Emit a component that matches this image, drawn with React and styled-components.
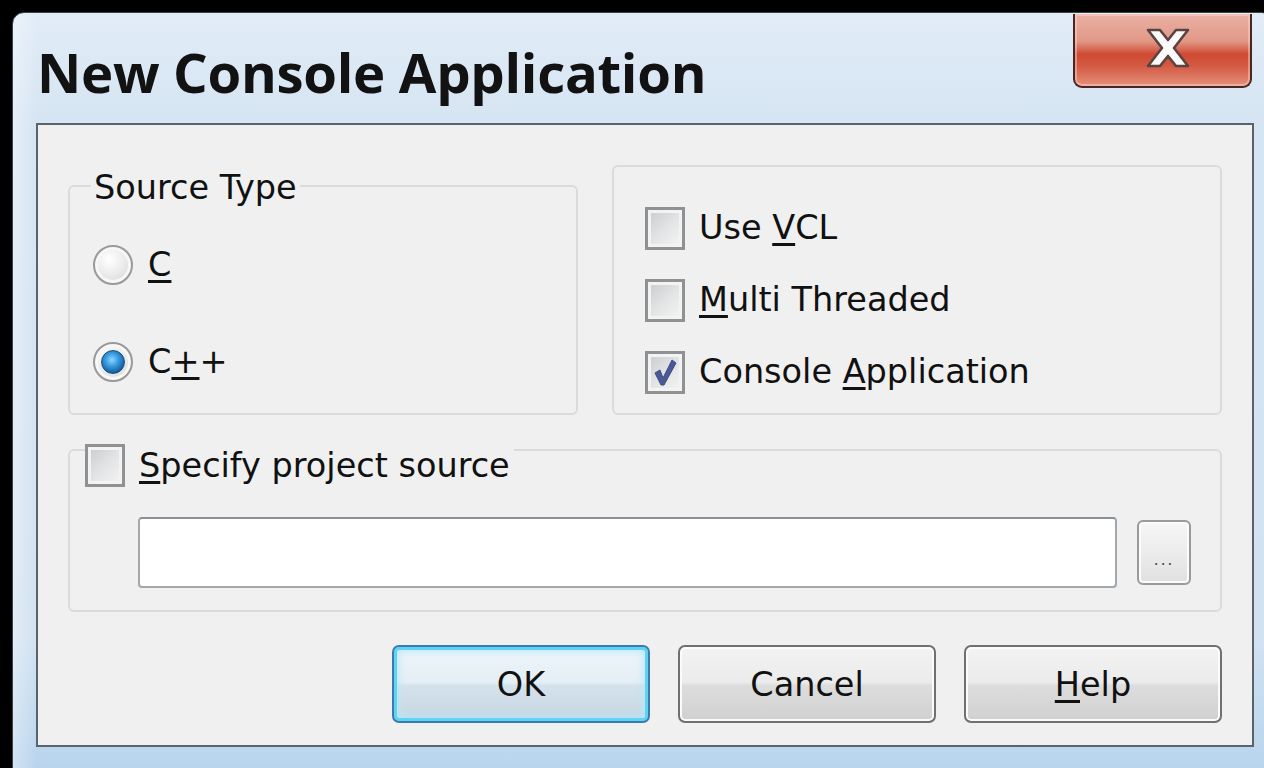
import React from 'react'
import styled, { createGlobalStyle } from 'styled-components'

const GlobalStyle = createGlobalStyle`
  html, body {
    margin: 0;
    padding: 0;
    background: #000;
  }
  body {
    font-family: "DejaVu Sans", Verdana, sans-serif;
  }
`

const Screen = styled.div`
  width: 1264px;
  height: 768px;
  box-sizing: border-box;
  padding: 12px 0 0 12px;
  overflow: hidden;
  background: #000;
`

const Window = styled.div`
  width: 1262px;
  height: 780px;
  box-sizing: border-box;
  border: 1px solid #3c434b;
  border-radius: 12px 12px 0 0;
  padding-left: 23px;
  background:
    linear-gradient(90deg, rgba(255,255,255,0.35) 0px, rgba(255,255,255,0) 24px),
    linear-gradient(180deg, #e1ecf7 0%, #d6e5f3 14%, #d2e2f1 80%, #b4d2ec 100%);
  display: flex;
  flex-direction: column;
`

const TitleBar = styled.div`
  width: 1218px;
  height: 110px;
  display: flex;
  justify-content: space-between;
  align-items: flex-start;
`

const Title = styled.h1`
  margin: 32px 0 0 1px;
  font-family: "Open Sans", "DejaVu Sans", sans-serif;
  font-weight: 700;
  font-size: 54.5px;
  line-height: 54px;
  letter-spacing: -0.3px;
  color: #121212;
`

const CloseButton = styled.button`
  width: 179px;
  height: 74px;
  margin: 1px 2px 0 0;
  padding: 0 0 4px 10px;
  border: 2px solid #4a2620;
  border-top: none;
  border-radius: 0 0 9px 9px;
  background: linear-gradient(180deg, #eab1a5 0%, #e19886 38%, #cf4a33 56%, #d35a42 72%, #e4907b 100%);
  box-shadow: inset 0 0 0 2px rgba(255, 220, 210, 0.45);
  display: flex;
  align-items: center;
  justify-content: center;
  cursor: pointer;
`

const Client = styled.div`
  width: 1218px;
  height: 624px;
  box-sizing: border-box;
  border: 2px solid #5a636c;
  background: #f0f0f0;
  padding: 40px 30px 0 30px;
  display: flex;
  flex-direction: column;
  color: #111;
  font-size: 33.5px;
`

const TopRow = styled.div`
  display: flex;
  gap: 34px;
  height: 250px;
`

const Group = styled.fieldset`
  margin: 0;
  min-width: 0;
  box-sizing: border-box;
  border: 2px solid #d9dcdf;
  border-radius: 6px;
  width: ${p => p.$width}px;
  padding: ${p => p.$pad};
  display: flex;
  flex-direction: column;
  gap: ${p => p.$gap}px;
`

const PlainGroup = styled.div`
  box-sizing: border-box;
  border: 2px solid #d9dcdf;
  border-radius: 6px;
  width: ${p => p.$width}px;
  padding: ${p => p.$pad};
  display: flex;
  flex-direction: column;
  gap: ${p => p.$gap}px;
`

const Legend = styled.legend`
  margin-left: -2px;
  padding: 4px 3px 0 3px;
  line-height: 38px;
`

const CheckLegend = styled.legend`
  margin-left: -53px;
  padding: 0 4px 0 0;
  height: 12px;
  display: flex;
  align-items: flex-start;
  gap: 14px;
  line-height: 44px;
`

const OptionRow = styled.label`
  display: flex;
  align-items: center;
  gap: ${p => p.$gap || 14}px;
  height: 44px;
  line-height: 38px;
`

const Mn = styled.span`
  text-decoration: underline;
  text-decoration-thickness: 3px;
  text-underline-offset: 4px;
`

const RadioCircle = styled.span`
  width: 40px;
  height: 40px;
  box-sizing: border-box;
  border-radius: 50%;
  border: 2px solid #9a9a9a;
  background: radial-gradient(circle at 40% 35%, #ffffff 0%, #ececec 45%, #cfcfcf 100%);
  box-shadow: inset 0 0 0 3px #f7f7f7;
  display: flex;
  align-items: center;
  justify-content: center;
  flex: none;

  &::after {
    content: '';
    display: ${p => (p.$on ? 'block' : 'none')};
    width: 22px;
    height: 22px;
    border-radius: 50%;
    border: 1px solid #1c4f7a;
    background: radial-gradient(circle at 45% 40%, #8fd4ff 0%, #3a9ee0 35%, #0d5a9c 75%, #083e6e 100%);
  }
`

const CheckBox = styled.span`
  width: 40px;
  height: 43px;
  box-sizing: border-box;
  border: 3px solid #8f9193;
  background: linear-gradient(135deg, #c9cacb 0%, #e2e3e4 50%, #f5f5f5 100%);
  box-shadow: inset 0 0 0 3px #f3f3f3;
  display: flex;
  align-items: center;
  justify-content: center;
  flex: none;
`

const BottomGroup = styled(Group)`
  margin-top: 29px;
  height: 168px;
  flex-direction: row;
  align-items: stretch;
  gap: 20px;
`

const PathInput = styled.input`
  width: 980px;
  height: 71px;
  box-sizing: border-box;
  border: 2px solid #a3a8ad;
  border-top-color: #8b9096;
  border-radius: 4px;
  background: #fff;
  font: inherit;
  outline: none;
`

const EllipsisButton = styled.button`
  width: 54px;
  height: 65px;
  margin-top: 3px;
  box-sizing: border-box;
  border: 2px solid #9a9a9a;
  border-radius: 6px;
  background: linear-gradient(180deg, #f6f6f6 0%, #ececec 50%, #e0e0e0 100%);
  box-shadow: inset 0 0 0 2px #fbfbfb;
  font-family: "DejaVu Sans", sans-serif;
  font-size: 15px;
  color: #444;
  display: flex;
  align-items: flex-end;
  justify-content: center;
  padding: 0 0 14px 0;
  letter-spacing: 2px;
`

const ButtonRow = styled.div`
  margin-top: 33px;
  display: flex;
  justify-content: flex-end;
  gap: 28px;
`

const DialogButton = styled.button`
  width: 258px;
  height: 78px;
  box-sizing: border-box;
  border-radius: 7px;
  border: 2px solid ${p => (p.$primary ? '#3a7cae' : '#707070')};
  background: ${p =>
    p.$primary
      ? 'linear-gradient(180deg, #eef5fa 0%, #e4eef5 48%, #d4e2ec 52%, #c6d6e2 100%)'
      : 'linear-gradient(180deg, #f3f3f3 0%, #ebebeb 48%, #dddddd 52%, #d0d0d0 100%)'};
  box-shadow: ${p =>
    p.$primary
      ? 'inset 0 0 0 3px #5fd3f6, inset 0 0 8px 4px #b5e9f8'
      : 'inset 0 0 0 2px #fbfbfb'};
  font-family: "DejaVu Sans", Verdana, sans-serif;
  font-size: 33.5px;
  color: #111;
  cursor: pointer;
`

const CloseGlyph = () => (
  <svg width="46" height="40" viewBox="-3 -2 46 40">
    <polygon
      points="0,0 12,0 20,10 28,0 40,0 26,18 40,36 28,36 20,26 12,36 0,36 14,18"
      fill="#fafafa"
      stroke="#5b4340"
      strokeWidth="2.6"
      strokeLinejoin="round"
    />
  </svg>
)

const Tick = () => (
  <svg width="26" height="30" viewBox="0 0 26 30">
    <path
      d="M3 16 L8 13 L11 21 L20 3 L24 6 L12 28 L9 28 Z"
      fill="#4c5896"
      stroke="#3e4a86"
      strokeWidth="1"
      strokeLinejoin="round"
    />
  </svg>
)

export default function App() {
  return (
    <Screen>
      <GlobalStyle />
      <Window>
        <TitleBar>
          <Title>New Console Application</Title>
          <CloseButton aria-label="Close">
            <CloseGlyph />
          </CloseButton>
        </TitleBar>

        <Client>
          <TopRow>
            <Group $width={510} $pad="36px 0 0 23px" $gap={53}>
              <Legend>Source Type</Legend>
              <OptionRow $gap={15}>
                <RadioCircle />
                <Mn>C</Mn>
              </OptionRow>
              <OptionRow $gap={15}>
                <RadioCircle $on />
                <span>C<Mn>+</Mn>+</span>
              </OptionRow>
            </Group>

            <PlainGroup $width={610} $pad="39px 0 0 31px" $gap={28}>
              <OptionRow>
                <CheckBox />
                <span>Use <Mn>V</Mn>CL</span>
              </OptionRow>
              <OptionRow>
                <CheckBox />
                <span><Mn>M</Mn>ulti Threaded</span>
              </OptionRow>
              <OptionRow>
                <CheckBox>
                  <Tick />
                </CheckBox>
                <span>Console <Mn>A</Mn>pplication</span>
              </OptionRow>
            </PlainGroup>
          </TopRow>

          <BottomGroup $pad="61px 29px 21px 68px">
            <CheckLegend>
              <CheckBox />
              <span><Mn>S</Mn>pecify project source</span>
            </CheckLegend>
            <PathInput />
            <EllipsisButton>...</EllipsisButton>
          </BottomGroup>

          <ButtonRow>
            <DialogButton $primary>OK</DialogButton>
            <DialogButton>Cancel</DialogButton>
            <DialogButton><Mn>H</Mn>elp</DialogButton>
          </ButtonRow>
        </Client>
      </Window>
    </Screen>
  )
}
